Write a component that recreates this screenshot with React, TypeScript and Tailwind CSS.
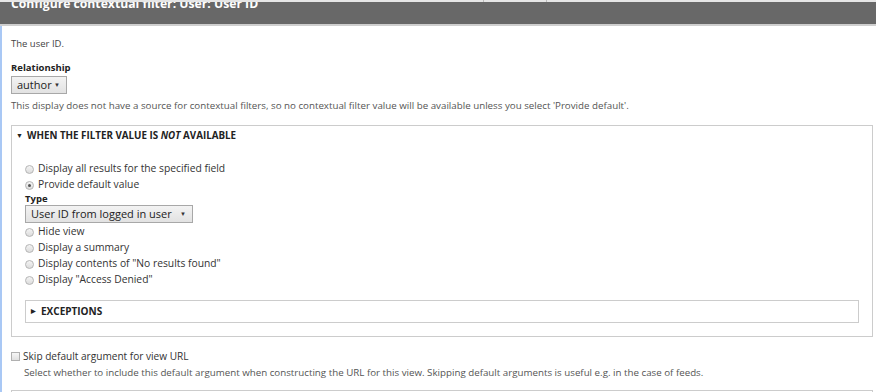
import React from "react";

const font = { fontFamily: '"Open Sans", "Liberation Sans", sans-serif' };

function Radio({ checked, label }: { checked?: boolean; label: string }) {
  return (
    <div className="flex h-4 items-center gap-[4px]">
      <span className="flex h-[9px] w-[9px] items-center justify-center rounded-full border border-[#b5b5b5] bg-gradient-to-b from-[#f4f4f4] to-[#dcdcdc]">
        {checked && <span className="h-[3px] w-[3px] rounded-full bg-[#555]" />}
      </span>
      <span className="text-[10.3px] text-[#333]">{label}</span>
    </div>
  );
}

function Select({ value, width }: { value: string; width: string }) {
  return (
    <div
      className={`flex h-[18px] items-center justify-between border border-[#a8a8a8] bg-gradient-to-b from-[#f3f3f3] to-[#e2e2e2] pl-[5px] pr-[6px] text-[11px] text-[#222] ${width}`}
    >
      <span>{value}</span>
      <span className="text-[6px] text-[#333]">▼</span>
    </div>
  );
}

export default function App() {
  return (
    <div className="h-[392px] w-[876px] overflow-hidden bg-white" style={font}>
      {/* browser strip */}
      <div className="flex h-[2px] bg-[#e6e6e6]">
        <div className="w-[484px] border-r border-[#bbb]" />
        <div className="w-[63px] border-r border-[#bbb]" />
      </div>
      {/* title bar */}
      <div className="h-[24px] overflow-hidden border-b-2 border-[#cfcfcf] bg-[#686868] pl-[11px]">
        <div className="-mt-[6px] text-[12.2px] font-bold leading-[16px] text-white">
          Configure contextual filter: User: User ID
        </div>
      </div>

      <div className="border-l-2 border-[#a9c8f5] pl-[9px] pr-[3px] text-[#333]">
        <p className="pt-[12px] text-[9.5px] leading-[12px] text-[#444]">The user ID.</p>

        <div className="mt-[12px] text-[9.5px] font-bold leading-[12px] text-[#222]">Relationship</div>
        <div className="mt-[2px]">
          <Select value="author" width="w-[56px]" />
        </div>
        <p className="mt-[6px] text-[9.75px] leading-[12px] text-[#555]">
          This display does not have a source for contextual filters, so no contextual filter value will be available
          unless you select 'Provide default'.
        </p>

        <div className="mt-[13px] h-[212px] border border-[#cccccc]">
          <div className="flex items-center gap-[4px] pl-[4px] pt-[4px] text-[9.8px] font-bold leading-[12px] text-[#222]">
            <span className="text-[7px]">▼</span>
            <span>
              WHEN THE FILTER VALUE IS <i>NOT</i> AVAILABLE
            </span>
          </div>

          <div className="pl-[13px] pr-[13px] pt-[19px]">
            <Radio label="Display all results for the specified field" />
            <Radio checked label="Provide default value" />
            <div className="text-[9.5px] font-bold leading-[12px] text-[#222]">Type</div>
            <Select value="User ID from logged in user" width="w-[168px]" />
            <div className="mt-[1px]">
              <Radio label="Hide view" />
              <Radio label="Display a summary" />
              <Radio label={'Display contents of "No results found"'} />
              <Radio label={'Display "Access Denied"'} />
            </div>

            <div className="mt-[12px] flex h-[23px] items-center gap-[5px] border border-[#cccccc] pl-[5px] text-[10px] font-bold text-[#222]">
              <span className="text-[6px]">▶</span>
              <span>EXCEPTIONS</span>
            </div>
          </div>
        </div>

        <div className="mt-[12px] flex items-center gap-[3px]">
          <span className="h-[9px] w-[9px] border border-[#b0b0b0] bg-gradient-to-b from-[#f6f6f6] to-[#e0e0e0]" />
          <span className="text-[10.1px] text-[#333]">Skip default argument for view URL</span>
        </div>
        <p className="mt-[3px] pl-[13px] text-[9.75px] leading-[12px] text-[#555]">
          Select whether to include this default argument when constructing the URL for this view. Skipping default
          arguments is useful e.g. in the case of feeds.
        </p>
        <div className="mt-[11px] h-[20px] border border-[#cccccc]" />
      </div>
    </div>
  );
}
